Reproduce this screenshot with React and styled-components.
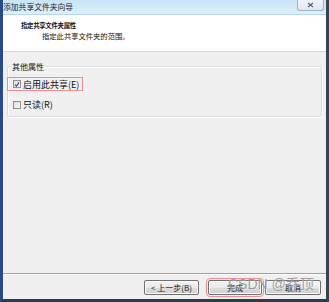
import React from "react";
import styled, { createGlobalStyle } from "styled-components";

const Global = createGlobalStyle`
  html, body { margin: 0; padding: 0; background: #f0f0f0; }
  * { box-sizing: border-box; }
`;

const FONT = `"Noto Sans CJK SC", "Liberation Sans", sans-serif`;

const Window = styled.div`
  width: 329px;
  height: 302px;
  display: flex;
  flex-direction: column;
  border-left: 3px solid #2c4a7e;
  border-right: 3px solid #3b4350;
  border-bottom: 3px solid #2f3a4c;
  font-family: ${FONT};
  color: #111;
  background: #f0f0f0;
  overflow: hidden;
`;

const TitleBar = styled.div`
  height: 15px;
  flex: none;
  display: flex;
  align-items: flex-start;
  background: linear-gradient(to bottom, #c9e4f7, #dcf0fd);
  border-bottom: 1px solid #b9d6ec;
`;

const Title = styled.div`
  font-size: 7.8px;
  line-height: 12px;
  color: #222;
  padding: 1px 0 0 0;
`;

const CloseBtn = styled.div`
  margin-left: auto;
  margin-right: 2px;
  width: 27px;
  height: 11px;
  border: 1px solid #9fb2c4;
  border-top: none;
  border-radius: 0 0 3px 3px;
  background: linear-gradient(to bottom, #eef4f9, #dfe8f0);
  display: flex;
  align-items: center;
  justify-content: center;
`;

const Header = styled.div`
  height: 37px;
  flex: none;
  background: #fff;
  border-bottom: 1px solid #d5d5d5;
  padding: 6px 0 0 18px;
`;

const Heading = styled.div`
  font-size: 6.4px;
  font-weight: bold;
  line-height: 9px;
  letter-spacing: -0.3px;
`;

const Sub = styled.div`
  font-size: 7.3px;
  line-height: 10px;
  padding-left: 21px;
  margin-top: 1px;
`;

const Body = styled.div`
  flex: 1;
  padding: 10px 4px 0 4px;
`;

const Group = styled.fieldset`
  margin: 0;
  padding: 6px 0 0 0;
  border: 1px solid #d5dfe5;
  border-radius: 2px;
  box-shadow: inset 1px 1px 0 #fff, 1px 1px 0 #fff;
  height: 55px;
`;

const Legend = styled.legend`
  font-size: 8px;
  line-height: 9px;
  padding: 0 1px;
  margin-left: 3px;
`;

const CheckRow = styled.label`
  display: flex;
  align-items: center;
  gap: 2px;
  height: 14px;
  width: ${(p) => (p.$highlight ? "76px" : "auto")};
  margin-left: -1px;
  padding-left: 5px;
  border: 1px solid ${(p) => (p.$highlight ? "#ef8f8f" : "transparent")};
  font-size: 9px;
  margin-bottom: 6.5px;
`;

const Box = styled.span`
  width: 8px;
  height: 8px;
  flex: none;
  border: 1px solid #8f8f8f;
  background: linear-gradient(135deg, #dcdcdc, #fafafa);
  display: flex;
  align-items: center;
  justify-content: center;
`;

const Footer = styled.div`
  flex: none;
  height: 26px;
  border-top: 1px solid #a0a0a0;
  box-shadow: inset 0 1px 0 #fff;
  display: flex;
  align-items: flex-start;
  padding: 6px 5px 0 0;
  justify-content: flex-end;
  position: relative;
`;

const Button = styled.div`
  width: ${(p) => p.$w || 55}px;
  height: 15px;
  margin-left: ${(p) => p.$gap || 0}px;
  border: 1px solid #707070;
  border-radius: 2px;
  background: linear-gradient(to bottom, #f2f2f2 0%, #ebebeb 50%, #dddddd 51%, #cfcfcf 100%);
  box-shadow: inset 0 0 0 1px #fbfbfb;
  font-size: 8px;
  display: flex;
  align-items: center;
  justify-content: center;
  outline: ${(p) => (p.$highlight ? "1px solid #ef8f8f" : "none")};
  outline-offset: 1px;
`;

const Watermark = styled.div`
  position: absolute;
  left: 225px;
  top: 2px;
  font-size: 14px;
  line-height: 16px;
  font-family: "Liberation Sans", "Noto Sans CJK SC", sans-serif;
  color: rgba(125, 125, 125, 0.75);
  text-shadow: 0 0 1px rgba(255, 255, 255, 0.7);
  pointer-events: none;
  white-space: nowrap;
`;

function Check({ checked }) {
  return (
    <Box>
      {checked && (
        <svg width="7" height="7" viewBox="0 0 7 7">
          <path d="M1 3.5 L2.8 5.5 L6 1" stroke="#2a3f8f" strokeWidth="1.3" fill="none" />
        </svg>
      )}
    </Box>
  );
}

export default function App() {
  return (
    <>
      <Global />
      <Window>
        <TitleBar>
          <Title>添加共享文件夹向导</Title>
          <CloseBtn>
            <svg width="7" height="6" viewBox="0 0 7 6">
              <path d="M1 1 L6 5 M6 1 L1 5" stroke="#55606c" strokeWidth="1.2" />
            </svg>
          </CloseBtn>
        </TitleBar>
        <Header>
          <Heading>指定共享文件夹属性</Heading>
          <Sub>指定此共享文件夹的范围。</Sub>
        </Header>
        <Body>
          <Group>
            <Legend>其他属性</Legend>
            <CheckRow $highlight>
              <Check checked />
              启用此共享(E)
            </CheckRow>
            <CheckRow>
              <Check />
              只读(R)
            </CheckRow>
          </Group>
        </Body>
        <Footer>
          <Button $w={55}>&lt; 上一步(B)</Button>
          <Button $w={54} $gap={9} $highlight>完成</Button>
          <Button $w={56} $gap={3}>取消</Button>
          <Watermark>CSDN @乔顶</Watermark>
        </Footer>
      </Window>
    </>
  );
}
